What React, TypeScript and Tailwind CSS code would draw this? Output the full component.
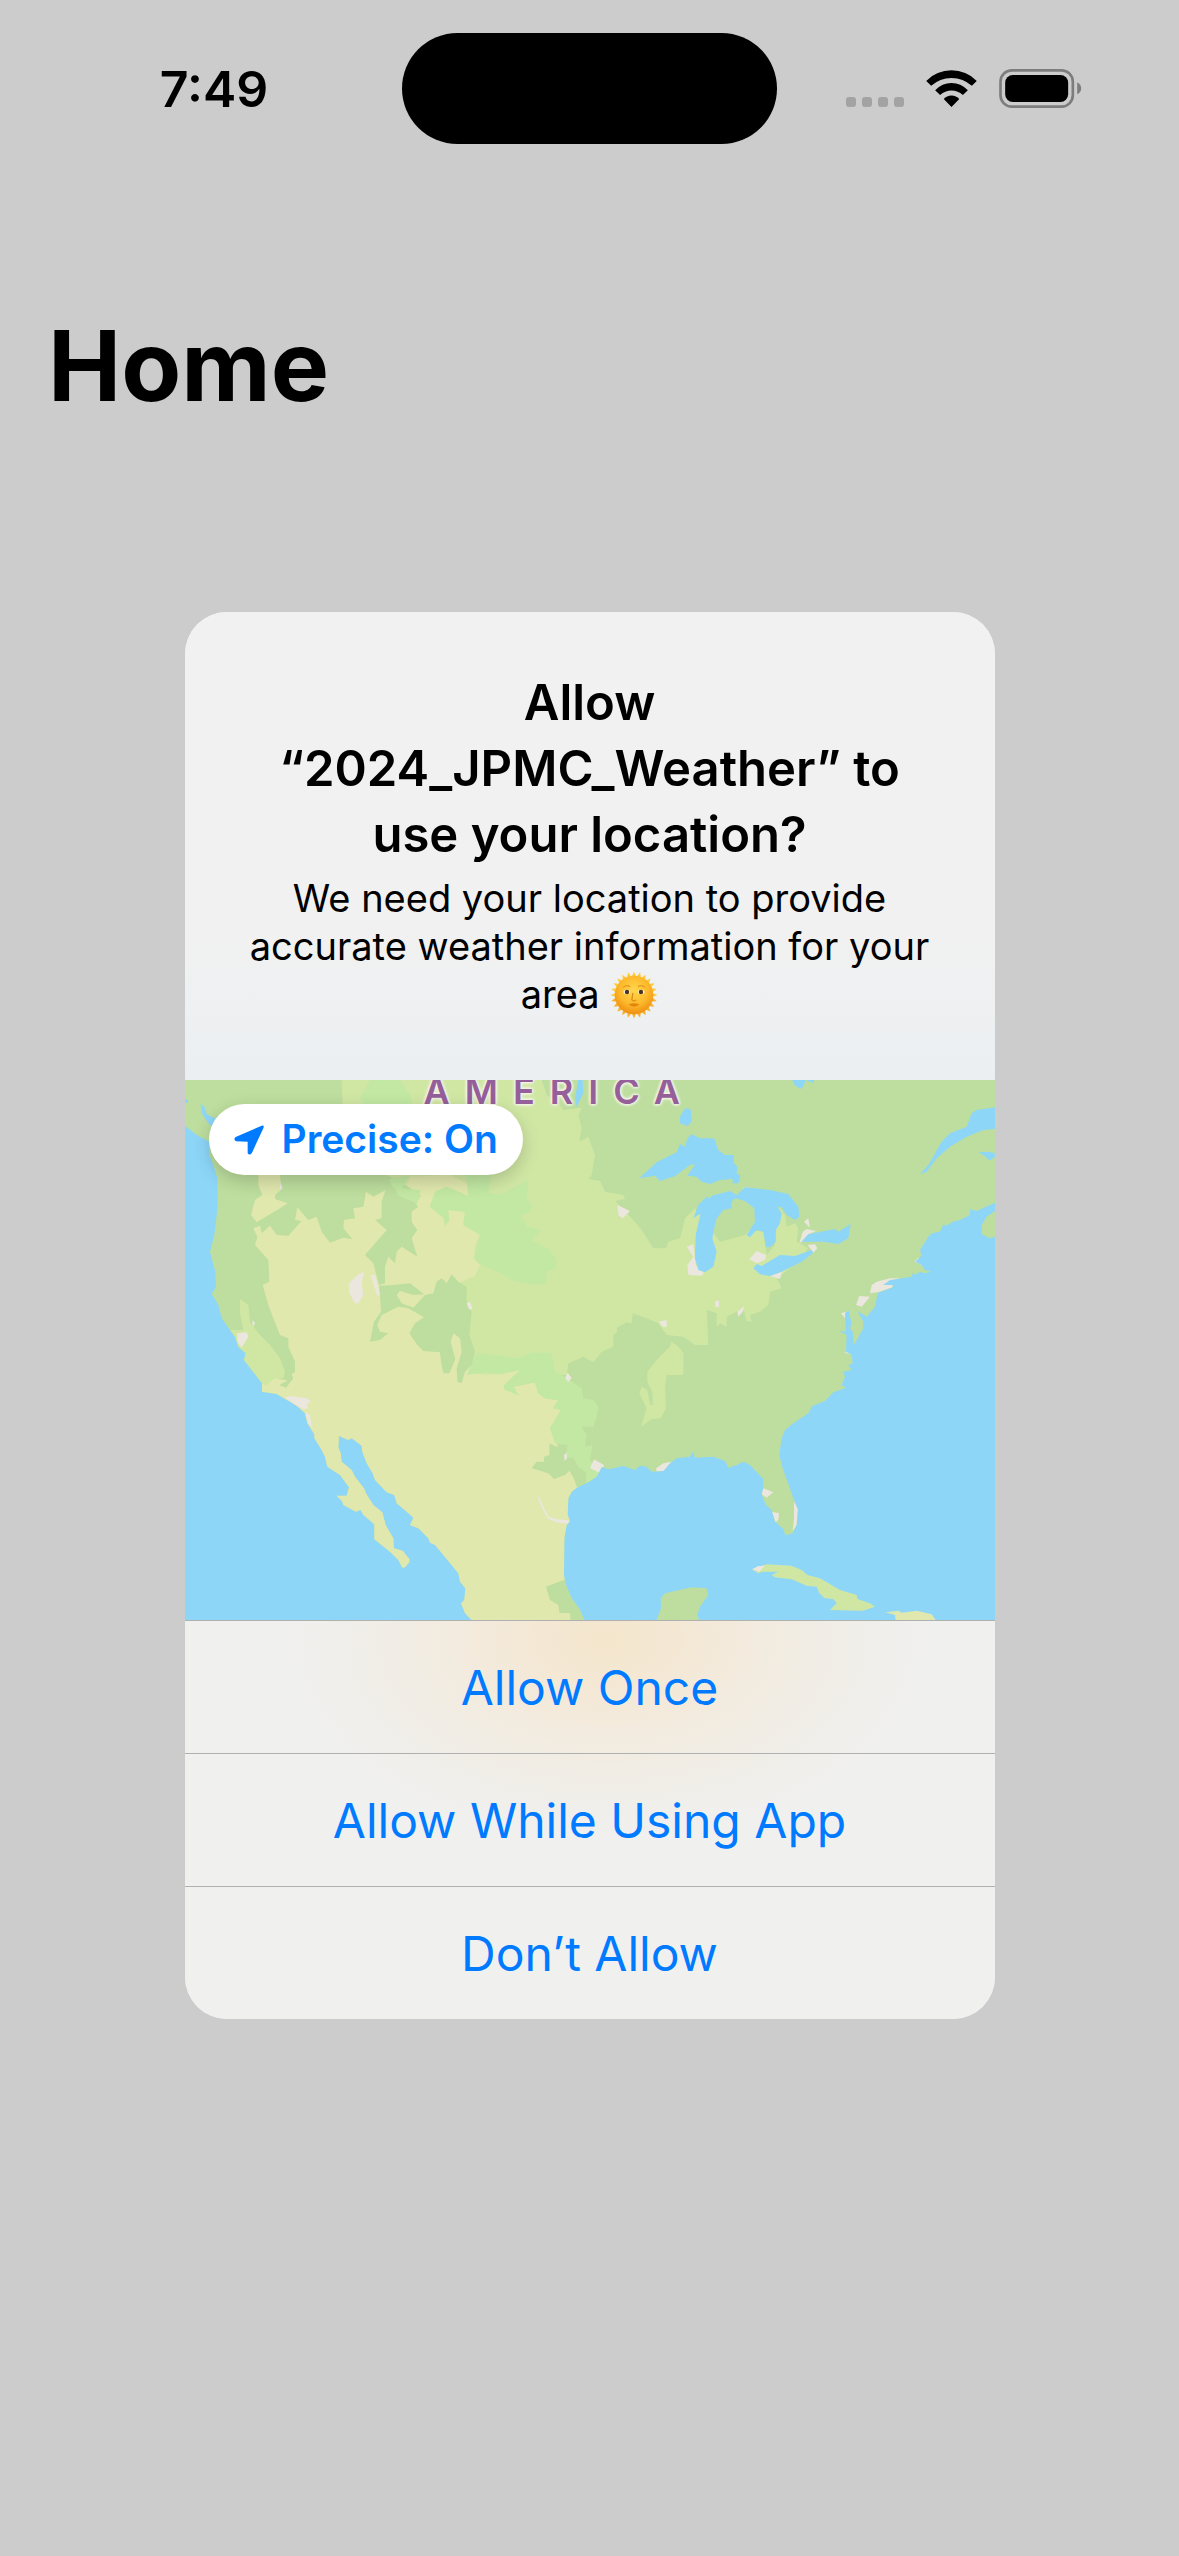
import React from "react";

const LAND =
  "15,15 2445,15 2445,383 2390,408 2370,403 2370,420 2340,435 2318,440 2300,452 2290,448 2280,470 2255,475 2245,485 2220,525 2225,542 2205,560 2225,570 2235,585 2253,590 2235,595 2220,590 2205,600 2200,590 2195,605 2130,615 2110,630 2138,630 2138,637 2093,655 2085,695 2060,725 2032,708 2050,740 2050,760 2022,810 2018,770 2010,760 2015,745 2005,705 1995,715 1998,770 1978,767 2000,780 1998,830 2015,840 2018,865 2005,870 2015,885 1990,890 1995,905 1985,930 1998,938 1960,952 1935,978 1897,993 1885,1015 1840,1045 1815,1065 1805,1090 1798,1140 1808,1180 1828,1235 1840,1270 1854,1305 1850,1350 1838,1375 1816,1381 1810,1362 1785,1340 1775,1305 1758,1290 1750,1272 1745,1257 1750,1240 1750,1212 1710,1170 1690,1160 1670,1170 1645,1178 1635,1158 1600,1145 1545,1148 1538,1130 1530,1145 1490,1150 1470,1165 1450,1188 1415,1190 1400,1175 1380,1172 1365,1185 1330,1173 1285,1183 1265,1176 1250,1205 1220,1225 1192,1237 1175,1250 1165,1270 1163,1320 1170,1338 1160,1350 1153,1390 1152,1500 1155,1525 1175,1570 1200,1605 1213,1635 875,1635 855,1615 843,1585 853,1575 856,1540 840,1520 835,1495 790,1440 765,1410 750,1403 745,1390 715,1360 690,1350 700,1328 680,1310 650,1285 643,1260 620,1252 585,1215 578,1195 560,1165 547,1130 545,1112 515,1090 505,1095 477,1083 475,1115 482,1135 485,1160 515,1185 525,1205 552,1240 558,1255 580,1290 607,1312 617,1350 640,1390 642,1420 668,1427 688,1452 688,1462 675,1477 667,1478 655,1455 630,1430 583,1393 583,1348 550,1320 542,1305 527,1310 490,1290 486,1278 470,1262 500,1262 507,1237 480,1200 442,1175 435,1145 425,1125 403,1090 403,1078 395,1065 382,1045 375,1015 350,992 330,980 290,957 246,950 246,925 215,885 192,855 197,835 175,815 165,785 150,765 125,730 115,690 95,657 108,635 106,590 98,560 90,530 103,480 110,420 113,380 112,310 100,270 88,240 88,200 50,180 15,152";

const WEST =
  "220,460 240,452 245,475 270,452 290,480 325,482 365,438 345,435 352,397 385,435 410,425 425,470 450,503 490,488 517,492 490,460 492,435 525,430 520,400 550,395 558,350 580,365 617,345 650,400 700,400 722,362 680,330 690,305 810,300 868,330 865,362 840,352 800,335 765,350 750,395 800,430 800,405 855,410 850,450 870,450 900,480 885,510 882,550 900,570 885,603 840,622 820,640 850,700 860,800 880,895 920,900 960,898 1000,890 1020,882 1015,895 970,935 1000,935 1065,922 1075,955 1095,970 1135,975 1120,1000 1143,1005 1110,1060 1130,1105 1170,1190 1200,1240 1200,1345 1160,1520 1172,1635 600,1635 380,1300 246,960 246,925 285,908 315,915 345,890 345,860 325,815 325,790 300,780 280,730 265,690 248,630 268,620 265,555 225,510 232,485";

const PLAINS =
  "485,15 1085,15 1100,60 1140,90 1150,105 1205,98 1195,120 1205,160 1198,200 1225,185 1245,240 1235,300 1225,312 1260,318 1275,350 1330,360 1335,372 1305,378 1355,430 1385,465 1420,520 1458,520 1465,500 1500,490 1515,430 1545,400 1620,500 1660,490 1695,480 1710,465 1750,470 1760,540 1785,510 1790,450 1805,420 1795,395 1815,420 1820,455 1845,445 1855,460 1850,500 1885,520 1830,580 1790,610 1805,640 1770,650 1765,690 1740,710 1710,720 1715,740 1700,738 1690,700 1640,725 1640,755 1620,745 1610,755 1610,715 1580,705 1585,810 1545,810 1510,785 1460,780 1435,745 1400,730 1358,715 1355,745 1340,742 1310,758 1312,770 1300,780 1300,815 1265,830 1240,862 1210,845 1165,865 1160,900 860,900 800,400 620,300 490,160";

const COLORADO =
  "597,632 640,630 690,625 732,658 700,660 660,648 650,660 665,685 700,698 735,660 760,655 770,620 785,610 800,625 815,598 835,620 860,635 860,680 875,710 868,780 885,830 875,870 855,890 845,925 832,920 830,880 845,830 840,790 820,775 812,800 825,850 825,855 808,895 790,895 783,860 780,832 730,828 712,810 688,775 705,745 732,727 685,700 655,695 605,720 592,750 600,770 625,775 600,795 570,800 582,740 603,710 600,660";

const ROCKIES =
  "560,300 620,300 650,360 700,380 715,395 695,410 695,440 712,465 695,490 712,545 665,515 650,530 645,565 625,545 615,575 615,625 597,630 580,565 555,540 620,465 585,435 605,430 605,380 617,345 560,340";

const MINT = [
  "540,70 570,15 660,15 690,60 700,95 560,95",
  "615,315 690,300 665,340 722,345 708,398 690,378 660,370 645,340",
  "858,300 935,300 925,355 960,360 1045,315 1040,370 1055,390 1050,410 1025,420 1040,455 1085,465 1055,495 1110,525 1130,555 1128,580 1100,590 1098,628 1060,628 1000,618 970,598 895,565 882,550 900,480 850,450 855,410 805,405 808,435 795,455 790,430 750,395 765,350 800,335 840,352 865,365",
  "860,900 890,835 960,842 1010,850 1060,832 1115,835 1125,890 1162,910 1205,940 1210,970 1240,975 1256,995 1250,1025 1240,1055 1205,1055 1220,1080 1215,1115 1238,1110 1230,1155 1270,1195 1220,1225 1215,1195 1195,1190 1180,1150 1155,1145 1160,1110 1125,1105 1110,1060 1143,1005 1120,1000 1135,975 1095,970 1075,955 1065,922 1000,935 1018,963 972,943 972,930 1020,885 960,898 920,892",
];

const TEXAS = [
  "1108,1105 1130,1115 1163,1110 1155,1148 1180,1150 1195,1175 1220,1195 1215,1220 1192,1240 1178,1200 1170,1185 1155,1200 1122,1212 1105,1195 1055,1180 1070,1160 1092,1160 1092,1145 1108,1140",
  "1098,1535 1150,1515 1160,1520 1220,1635 1172,1635 1172,1615 1138,1613 1135,1590 1110,1575",
];

const LIGHT = [
  "180,672 205,690 210,740 235,775 270,810 300,850 315,890 310,910 285,910 258,932 240,920 180,870 160,810 150,765 190,765 180,715",
  "1470,815 1475,800 1495,815 1510,835 1510,900 1460,900 1455,940 1458,1000 1442,1030 1415,1032 1383,1055 1400,1000 1378,955 1385,935 1402,945 1410,990 1418,990 1418,955 1402,920 1402,890 1430,855",
];

const WATER = [
  "62,88 72,92 80,118 105,130 108,165 85,145 65,115",
  "1378,310 1430,262 1490,232 1500,207 1515,215 1522,190 1535,178 1560,190 1602,190 1615,225 1635,240 1662,240 1660,262 1672,275 1670,295 1682,303 1675,325 1658,325 1658,312 1620,315 1590,327 1565,320 1550,305 1522,302 1545,268 1530,270 1485,303 1440,318 1425,302",
  "1500,125 1515,100 1532,103 1535,140 1522,153 1500,145",
  "1540,430 1555,390 1580,365 1590,370 1595,362 1650,348 1670,360 1695,337 1770,345 1825,357 1855,395 1858,425 1845,435 1820,420 1805,397 1792,395 1805,415 1800,445 1787,465 1787,500 1770,517 1758,515 1750,470 1730,465 1710,487 1700,480 1725,440 1723,400 1695,378 1665,370 1655,380 1655,400 1630,405 1610,430 1605,450 1597,490 1610,530 1600,575 1575,592 1555,585 1545,550 1547,480 1562,415",
  "1720,580 1730,567 1745,573 1800,540 1845,543 1895,525 1900,533 1865,560 1805,590 1770,603 1740,598",
  "1865,500 1885,478 1965,462 1975,470 2012,447 2005,490 1975,507 1930,500",
  "2445,97 2390,105 2375,115 2360,155 2310,175 2285,200 2245,270 2220,298 2240,290 2270,250 2310,215 2360,185 2410,165 2445,162",
  "2395,232 2425,230 2445,235 2445,245 2428,257 2415,243",
  "1837,15 1902,15 1902,25 1878,15 1865,42 1845,32",
  "1195,15 1208,15 1210,55 1190,95 1185,70",
  "15,72 24,76 24,84 15,84",
];

const URBAN = [
  "507,625 535,598 552,592 545,625 550,660 535,685 525,685 508,655",
  "572,600 585,600 600,660 592,662",
  "300,320 308,340 300,345",
  "172,775 200,772 205,785 185,818 172,800",
  "216,735 226,745 219,755",
  "1312,390 1350,408 1328,430 1315,420",
  "1520,515 1540,508 1547,570 1572,595 1565,602 1525,600 1522,570 1540,545",
  "1688,340 1705,337 1698,350",
  "1708,553 1730,528 1758,540 1755,555 1730,565",
  "1858,505 1868,470 1880,462 1908,468 1885,478 1865,500",
  "1883,510 1905,508 1912,520 1900,533",
  "1872,440 1885,430 1890,458",
  "1770,603 1806,590 1800,612",
  "1672,710 1692,694 1690,708 1675,725",
  "1436,740 1460,735 1460,755 1450,757",
  "1605,680 1617,675 1617,695 1607,697",
  "860,685 870,680 878,703 867,703",
  "1983,715 2005,708 1995,730",
  "2028,690 2038,663 2070,665 2045,695",
  "2070,655 2075,630 2090,620 2130,610 2160,610 2110,628 2138,629 2138,637 2093,652",
  "2203,560 2215,548 2225,570",
  "1992,833 2003,830 2015,838",
  "1155,908 1163,893 1175,908 1165,922",
  "1230,1180 1242,1153 1272,1170 1262,1195",
  "1428,1180 1450,1165 1475,1160 1455,1188 1430,1190",
  "1070,1260 1082,1275 1092,1300 1105,1325 1130,1333 1165,1336 1168,1348 1130,1342 1105,1332 1090,1308",
  "315,968 330,963 380,970 392,978 380,990 385,1000 370,1003 350,992",
  "375,1012 390,1020 395,1060 385,1045",
  "1750,1240 1780,1252 1760,1268 1744,1257",
  "1775,1310 1797,1315 1795,1335 1787,1342",
  "1842,1280 1854,1300 1850,1350 1838,1368 1842,1330",
  "1152,1140 1160,1133 1161,1150 1154,1158",
];

function CoverageMap() {
  return (
    <svg
      viewBox="15 15 2430 1620"
      preserveAspectRatio="xMidYMid slice"
      className="block aspect-[3/2] w-full"
      role="img"
      aria-label="Map of North America"
    >
      <defs>
        <clipPath id="land">
          <polygon points={LAND} />
        </clipPath>
      </defs>
      <rect x="15" y="15" width="2430" height="1620" fill="#8dd6f8" />
      <g clipPath="url(#land)">
        <rect x="15" y="15" width="2430" height="1620" fill="#bdde9e" />
        <polygon points={PLAINS} fill="#d0e7a4" />
        <polygon points={WEST} fill="#e0e8ae" />
        <polygon points="235,295 300,295 303,345 285,360 285,372 323,385 300,400 230,442 213,420 225,375 247,360 235,330" fill="#e0e8ae" />
        {MINT.map((p) => (
          <polygon key={p} points={p} fill="#c2e8a3" />
        ))}
        <g fill="#bdde9e">
          <polygon points={ROCKIES} />
          <polygon points={COLORADO} />
          <polygon points="270,810 245,785 290,800 320,815 345,860 345,890 330,890 340,910 318,938 297,930 322,918 310,905 313,880 300,850" />
          {TEXAS.map((p) => (
            <polygon key={p} points={p} />
          ))}
        </g>
        {LIGHT.map((p) => (
          <polygon key={p} points={p} fill="#d0e7a4" />
        ))}
        {URBAN.map((p) => (
          <polygon key={p} points={p} fill="#ebe6de" />
        ))}
      </g>
      {WATER.map((p) => (
        <polygon key={p} points={p} fill="#8dd6f8" />
      ))}
      <polygon points="2445,408 2420,425 2405,450 2405,478 2430,490 2445,485" fill="#bdde9e" />
      <polygon points="1430,1635 1443,1600 1442,1570 1455,1555 1535,1537 1580,1540 1585,1560 1560,1595 1552,1620 1558,1635" fill="#bdde9e" />
      <polygon points="1716,1483 1760,1468 1835,1472 1865,1485 1882,1500 1920,1510 1980,1545 2030,1560 2032,1572 2070,1585 2085,1595 2050,1607 1950,1605 1970,1585 1960,1572 1935,1570 1918,1555 1910,1535 1880,1532 1835,1513 1785,1507 1775,1500 1795,1490 1745,1490 1735,1495" fill="#d0e7a4" />
      <polygon points="1716,1483 1735,1473 1755,1472 1738,1490" fill="#ebe6de" />
      <polygon points="2117,1612 2155,1607 2165,1613 2210,1607 2255,1618 2267,1635 2147,1635 2145,1620" fill="#e0e8ae" />
    </svg>
  );
}

function SunFace() {
  const rays = Array.from({ length: 24 }, (_, i) => i * 15);
  return (
    <svg viewBox="-22 -22 44 44" className="inline-block size-12 align-[-11px]" role="img" aria-label="Sun with face">
      <defs>
        <radialGradient id="sun" cx="50%" cy="38%" r="62%">
          <stop offset="0" stopColor="#ffd84f" />
          <stop offset="0.6" stopColor="#fdb92c" />
          <stop offset="1" stopColor="#ee8f12" />
        </radialGradient>
      </defs>
      {rays.map((a) => (
        <path key={a} d="M-2.4 -16 L0 -21.5 L2.4 -16 Z" fill={a > 100 && a < 260 ? "#f6b02c" : "#fdcb3a"} transform={`rotate(${a})`} />
      ))}
      <circle r="17.6" fill="url(#sun)" />
      <path d="M-10 -7 Q-7 -10 -3.5 -7.5 M3.5 -7.5 Q7 -10 10 -7" fill="none" stroke="#e59a1c" strokeWidth="1.2" />
      <ellipse cx="-6.6" cy="-2.8" rx="3" ry="2" fill="#fff3d0" />
      <ellipse cx="6.6" cy="-2.8" rx="3" ry="2" fill="#fff3d0" />
      <circle cx="-6.4" cy="-2.8" r="2" fill="#4a3424" />
      <circle cx="6.4" cy="-2.8" r="2" fill="#4a3424" />
      <path d="M-1 -2 L-2 4.500 Q0 6.500 2 4.500" fill="none" stroke="#e08c14" strokeWidth="1.2" />
      <path d="M-5 8.500 Q0 6.500 5 8.500 Q0 13 -5 8.500 Z" fill="#e2850f" />
    </svg>
  );
}

function StatusBar() {
  return (
    <div className="grid h-[177px] grid-cols-[1fr_375px_1fr] items-center">
      <time className="pl-[26px] text-center text-[50px] leading-none font-semibold">7:49</time>
      <div className="h-[111px] rounded-full bg-black" />
      <div className="flex items-end justify-end pr-[97px]">
        <div className="mr-[22px] mb-px flex gap-[6px]">
          <span className="size-[10px] rounded-[3px] bg-[#a3a3a3]" />
          <span className="size-[10px] rounded-[3px] bg-[#a3a3a3]" />
          <span className="size-[10px] rounded-[3px] bg-[#a3a3a3]" />
          <span className="size-[10px] rounded-[3px] bg-[#a3a3a3]" />
        </div>
        <svg viewBox="318 56 153 112" className="mr-[22px] mb-px h-[37px] w-[51px]" aria-label="Wi-Fi">
          <path d="M318 89 Q350 57 394.500 57 Q439 57 471 89 L456 104 Q430 80 394.500 80 Q359 80 333 104 Z" />
          <path d="M345 117 Q366 95 394.500 95 Q423 95 444 117 L429 132 Q414 118 394.500 118 Q375 118 360 132 Z" />
          <path d="M371 144 Q380 133 394.500 133 Q409 133 418 144 L394.500 168 Z" />
        </svg>
        <svg viewBox="537 54 248 117" className="h-[39px] w-[83px]" aria-label="Battery full">
          <rect x="541" y="58" width="217" height="109" rx="34" fill="none" stroke="#7d7d7d" strokeWidth="8" />
          <rect x="555" y="72" width="189" height="81" rx="23" />
          <path d="M771 94 Q783 100 783 112 Q783 124 771 130 Z" fill="#7d7d7d" />
        </svg>
      </div>
    </div>
  );
}

const ACTIONS = ["Allow Once", "Allow While Using App", "Don’t Allow"];

export default function App() {
  return (
    <main className="min-h-screen bg-[#cccccc] font-['Inter',sans-serif] text-black">
      <StatusBar />
      <h1 className="px-12 pt-[129px] text-[98px] leading-[120px] font-bold">Home</h1>
      <section
        role="dialog"
        aria-labelledby="title"
        aria-describedby="reason"
        className="mx-auto mt-[186px] max-w-[810px] overflow-hidden rounded-[42px] bg-[#f0f1f0]"
      >
        <div className="h-[468px] bg-linear-to-b from-[#f1f1f1] from-70% to-[#ebeff2] px-12 pt-[58px] text-center">
          <h2 id="title" className="text-[49px] leading-[66px] font-semibold">
            Allow
            <br />
            “2024_JPMC_Weather” to
            <br />
            use your location?
          </h2>
          <p id="reason" className="mt-[6px] text-[38px] leading-[48px]">
            We need your location to provide
            <br />
            accurate weather information for your
            <br />
            area <SunFace />
          </p>
        </div>
        <div className="relative overflow-hidden">
          <CoverageMap />
          <span className="absolute top-0 left-[239px] text-[36px] leading-[22px] font-semibold tracking-[15px] whitespace-nowrap text-[#95609a] [text-shadow:0_0_3px_#f3f3e6,0_0_3px_#f3f3e6,0_0_3px_#f3f3e6,0_0_3px_#f3f3e6,0_0_4px_#f3f3e6]">
            AMERICA
          </span>
          <button
            type="button"
            className="absolute top-6 left-6 flex h-[71px] items-center gap-[18px] rounded-full bg-white px-[25px] text-[39px] font-semibold text-[#007aff] shadow-[0_6px_18px_rgba(0,0,0,0.18)]"
          >
            <svg viewBox="163 149 90 90" className="size-[30px]" fill="currentColor" aria-hidden="true">
              <path d="M246 151 Q255 149 251 159 L217 232 Q210 242 204 234 L204 199 L169 198 Q160 192 168 185 Z" />
            </svg>
            Precise: On
          </button>
        </div>
        <div className="bg-[radial-gradient(ellipse_320px_200px_at_52%_20px,#f4e6cc,#f4e9d8_30%,#f1ede5_65%,#f0f0ef_100%)]">
          {ACTIONS.map((label) => (
            <button
              key={label}
              type="button"
              className="block h-[133px] w-full border-t border-[#b0b0b0] pt-[2px] text-[48px] text-[#007aff]"
            >
              {label}
            </button>
          ))}
        </div>
      </section>
    </main>
  );
}
